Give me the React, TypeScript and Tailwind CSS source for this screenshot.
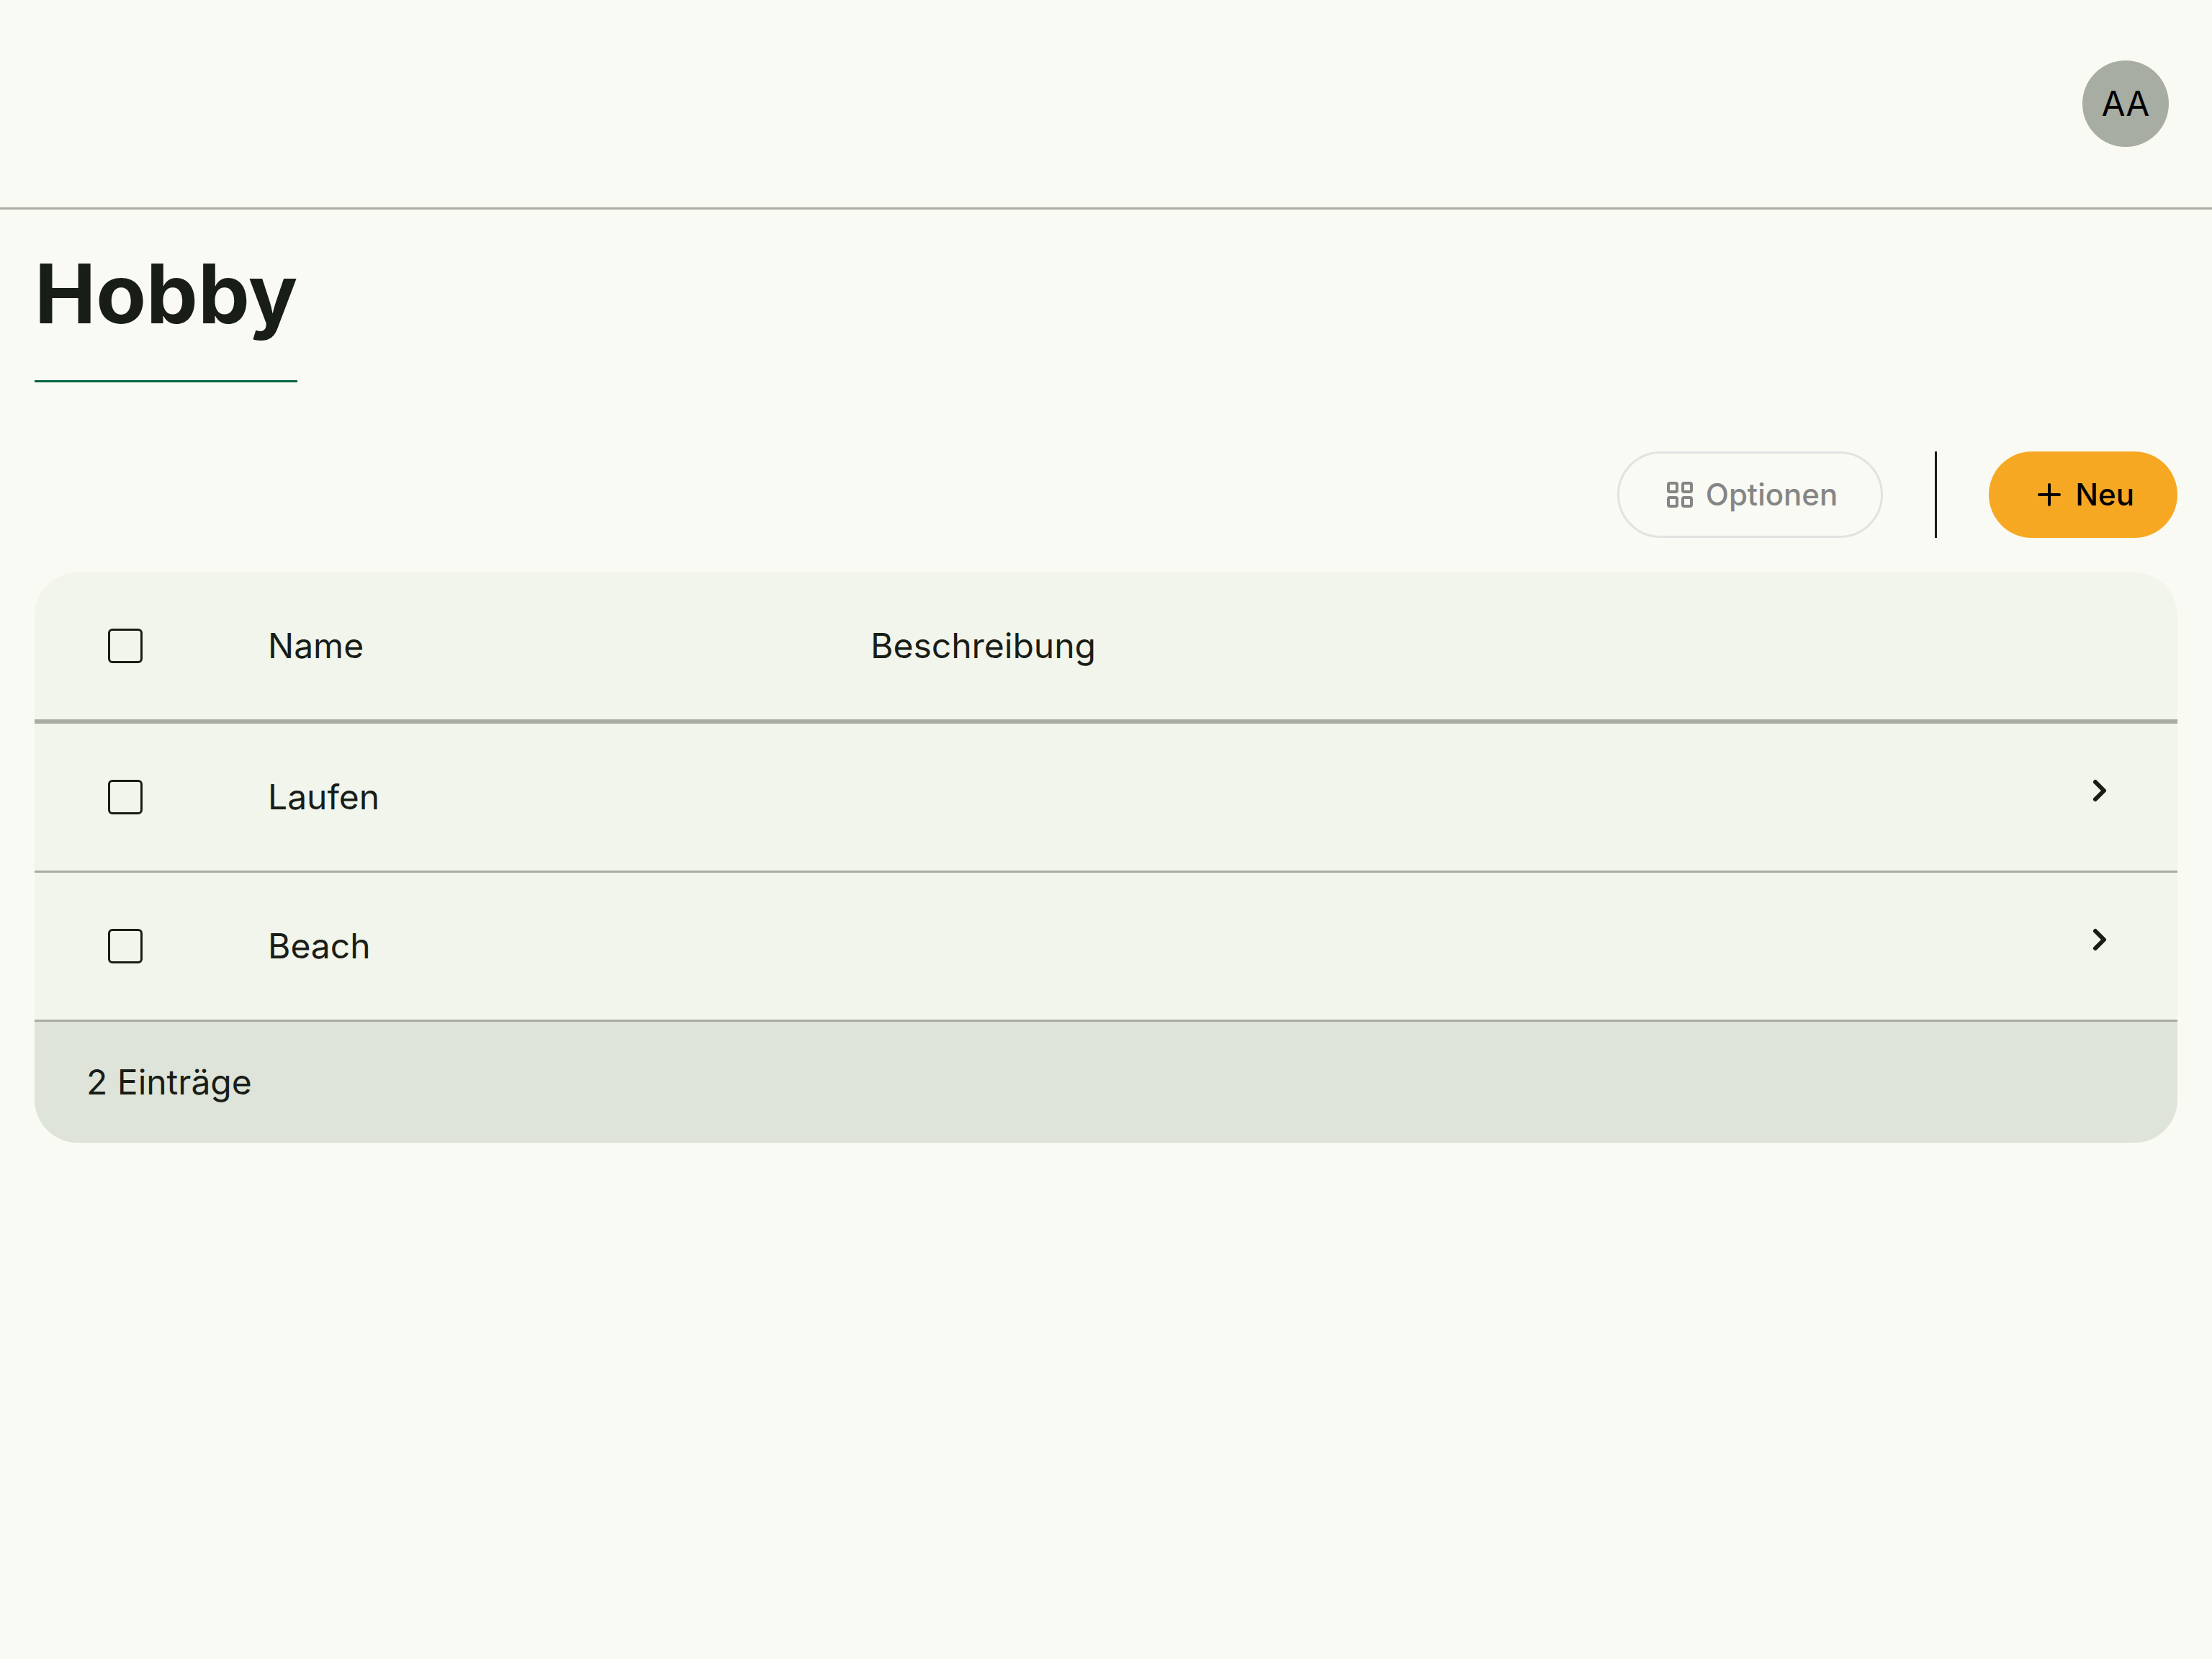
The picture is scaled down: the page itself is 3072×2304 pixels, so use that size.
import { TbChevronRight, TbLayoutGrid, TbPlus } from "react-icons/tb";

const hobbies = [
  { name: "Laufen", description: "" },
  { name: "Beach", description: "" },
];

function Checkbox({ label }: { label: string }) {
  return (
    <input
      type="checkbox"
      aria-label={label}
      className="block mx-auto size-12 appearance-none rounded-md border-3 border-[#191d17] checked:bg-[#006442]"
    />
  );
}

export default function App() {
  return (
    <div className="min-h-screen bg-[#f9faf4] font-['Inter',sans-serif] text-5xl/[72px] text-[#191d17]">
      <header className="flex justify-end border-b-3 border-[#a7ada3] px-15 py-21">
        <button
          type="button"
          aria-label="Benutzerkonto"
          className="flex size-30 items-center justify-center rounded-full bg-[#a7ada3] text-black"
        >
          AA
        </button>
      </header>

      <main className="px-12 pt-[45px]">
        <h1 className="w-fit border-b-3 border-[#006442] pb-12 text-[114px]/[144px] font-bold">
          Hobby
        </h1>

        <div className="mt-24 flex h-30 justify-end gap-18 text-[42px]/[60px] font-medium">
          <button
            type="button"
            disabled
            className="flex items-center gap-3 rounded-full border-3 border-[#e2e2e2] px-15 text-[#858585]"
          >
            <TbLayoutGrid className="size-12" />
            Optionen
          </button>
          <div className="w-[3px] bg-[#191d17]" />
          <button
            type="button"
            className="flex items-center gap-3 rounded-full bg-[#f7a823] px-15 text-black"
          >
            <TbPlus className="size-12" />
            Neu
          </button>
        </div>

        <div className="mt-12 overflow-hidden rounded-[60px] bg-[#f2f5eb]">
          <table className="w-full table-fixed border-separate border-spacing-0 text-left">
            <thead>
              <tr className="*:h-[210px] *:border-b-6 *:border-[#a7ada3] *:font-normal">
                <th scope="col" className="w-[252px]">
                  <Checkbox label="Alle auswählen" />
                </th>
                <th scope="col" className="w-9/32 px-18">
                  Name
                </th>
                <th scope="col" className="px-18">
                  Beschreibung
                </th>
                <td className="w-[216px]" />
              </tr>
            </thead>
            <tbody>
              {hobbies.map((hobby) => (
                <tr key={hobby.name} className="*:h-[207px] *:border-b-3 *:border-[#a7ada3]">
                  <td>
                    <Checkbox label={`${hobby.name} auswählen`} />
                  </td>
                  <td className="px-18">{hobby.name}</td>
                  <td className="px-18">{hobby.description}</td>
                  <td>
                    <a
                      href={`#${hobby.name.toLowerCase()}`}
                      aria-label={`${hobby.name} öffnen`}
                      className="mx-auto block w-fit pb-[18px]"
                    >
                      <TbChevronRight className="size-12 stroke-3" />
                    </a>
                  </td>
                </tr>
              ))}
            </tbody>
          </table>
          <div className="bg-[#dee4d9] px-18 py-12">{hobbies.length} Einträge</div>
        </div>
      </main>
    </div>
  );
}
